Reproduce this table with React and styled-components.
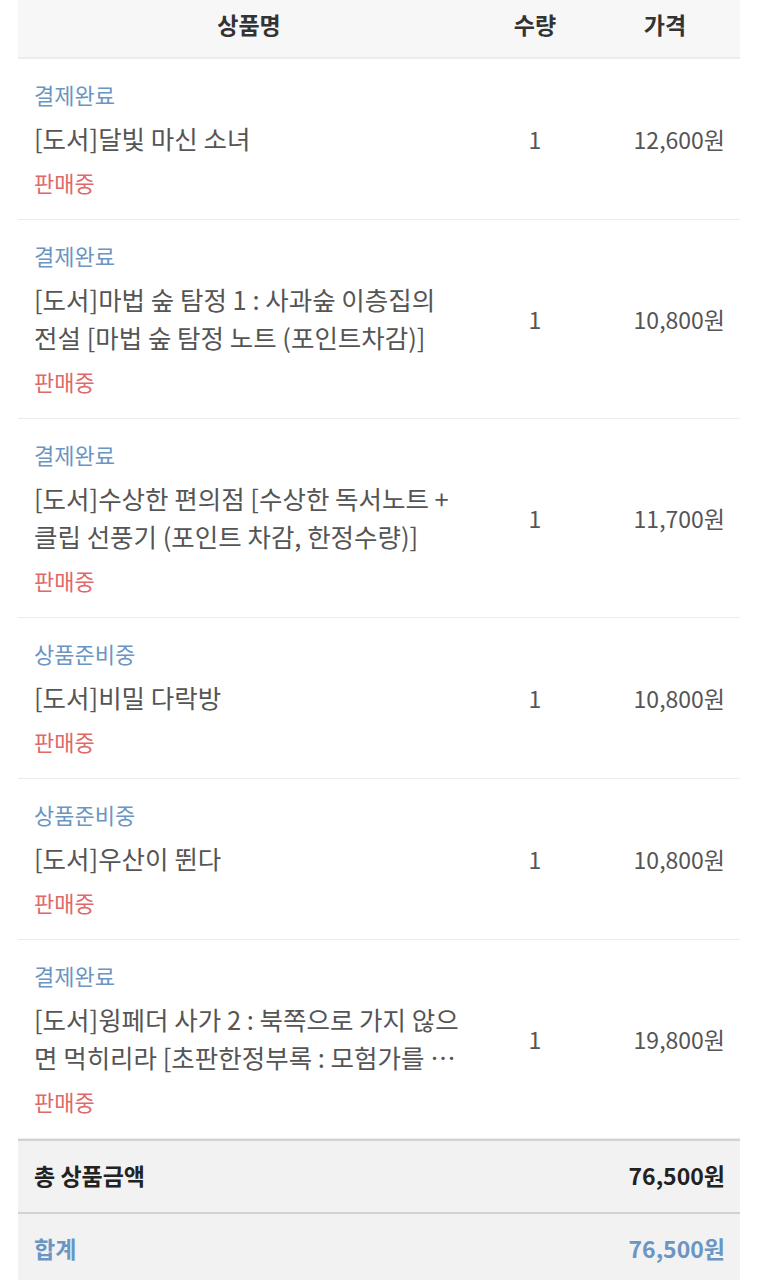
import React from 'react';
import styled, { createGlobalStyle } from 'styled-components';

const GlobalStyle = createGlobalStyle`
  body {
    margin: 0;
    background: #ffffff;
    font-family: 'Noto Sans CJK KR', 'Noto Sans', sans-serif;
  }
`;

const items = [
  { status: '결제완료', title: '[도서]달빛 마신 소녀', qty: 1, price: '12,600원' },
  {
    status: '결제완료',
    title: '[도서]마법 숲 탐정 1 : 사과숲 이층집의 전설 [마법 숲 탐정 노트 (포인트차감)]',
    qty: 1,
    price: '10,800원'
  },
  {
    status: '결제완료',
    title: '[도서]수상한 편의점 [수상한 독서노트 + 클립 선풍기 (포인트 차감, 한정수량)]',
    qty: 1,
    price: '11,700원'
  },
  { status: '상품준비중', title: '[도서]비밀 다락방', qty: 1, price: '10,800원' },
  { status: '상품준비중', title: '[도서]우산이 뛴다', qty: 1, price: '10,800원' },
  {
    status: '결제완료',
    title: '[도서]윙페더 사가 2 : 북쪽으로 가지 않으면 먹히리라 [초판한정부록 : 모험가를 위한 지도 + 스티커]',
    qty: 1,
    price: '19,800원'
  }
];

const App = () => {
  return (
    <Page>
      <GlobalStyle />
      <Table>
        <HeadRow>
          <HeadCell>상품명</HeadCell>
          <HeadCell>수량</HeadCell>
          <HeadCell>가격</HeadCell>
        </HeadRow>
        {items.map((item, i) => (
          <Row key={i}>
            <NameCell>
              <Status>{item.status}</Status>
              <Title>{item.title}</Title>
              <Sale>판매중</Sale>
            </NameCell>
            <QtyCell>{item.qty}</QtyCell>
            <PriceCell>{item.price}</PriceCell>
          </Row>
        ))}
        <SumRow>
          <span>총 상품금액</span>
          <span>76,500원</span>
        </SumRow>
        <SumRow total>
          <span>합계</span>
          <span>76,500원</span>
        </SumRow>
      </Table>
    </Page>
  );
};

const Page = styled.div`
  padding: 0 17px 0 18px;
`;

const Table = styled.div`
  width: 722px;
`;

const HeadRow = styled.div`
  display: grid;
  grid-template-columns: 462px 110px 150px;
  height: 59px;
  padding-bottom: 10px;
  box-sizing: border-box;
  align-items: center;
  background-color: #f7f7f7;
  border-bottom: solid 2px #ececec;
`;

const HeadCell = styled.div`
  text-align: center;
  font-size: 23px;
  font-weight: 700;
  color: #333333;
`;

const Row = styled.div`
  display: grid;
  grid-template-columns: 462px 110px 150px;
  align-items: center;
  border-bottom: solid 1px #ececec;
  :last-of-type {
    border-bottom: none;
  }
`;

const NameCell = styled.div`
  padding: 20px 20px 22px 16px;
  display: flex;
  flex-direction: column;
  gap: 10px;
  font-size: 22px;
`;

const Status = styled.div`
  line-height: 30px;
  color: #6b95c2;
`;

const Title = styled.div`
  font-size: 25.5px;
  line-height: 38px;
  color: #555555;
  display: -webkit-box;
  -webkit-line-clamp: 2;
  -webkit-box-orient: vertical;
  overflow: hidden;
`;

const Sale = styled.div`
  line-height: 30px;
  color: #e06868;
`;

const QtyCell = styled.div`
  text-align: center;
  font-size: 23px;
  color: #555555;
`;

const PriceCell = styled.div`
  text-align: right;
  padding-right: 15px;
  font-size: 23px;
  color: #555555;
`;

const SumRow = styled.div`
  display: flex;
  justify-content: space-between;
  align-items: center;
  height: 73px;
  padding: 0 15px 3px 16px;
  box-sizing: border-box;
  background-color: #f2f2f2;
  border-top: solid 2px #d2d2d2;
  font-size: 23px;
  font-weight: 700;
  color: ${({ total }) => (total ? '#6b95c2' : '#222222')};
`;

export default App;
